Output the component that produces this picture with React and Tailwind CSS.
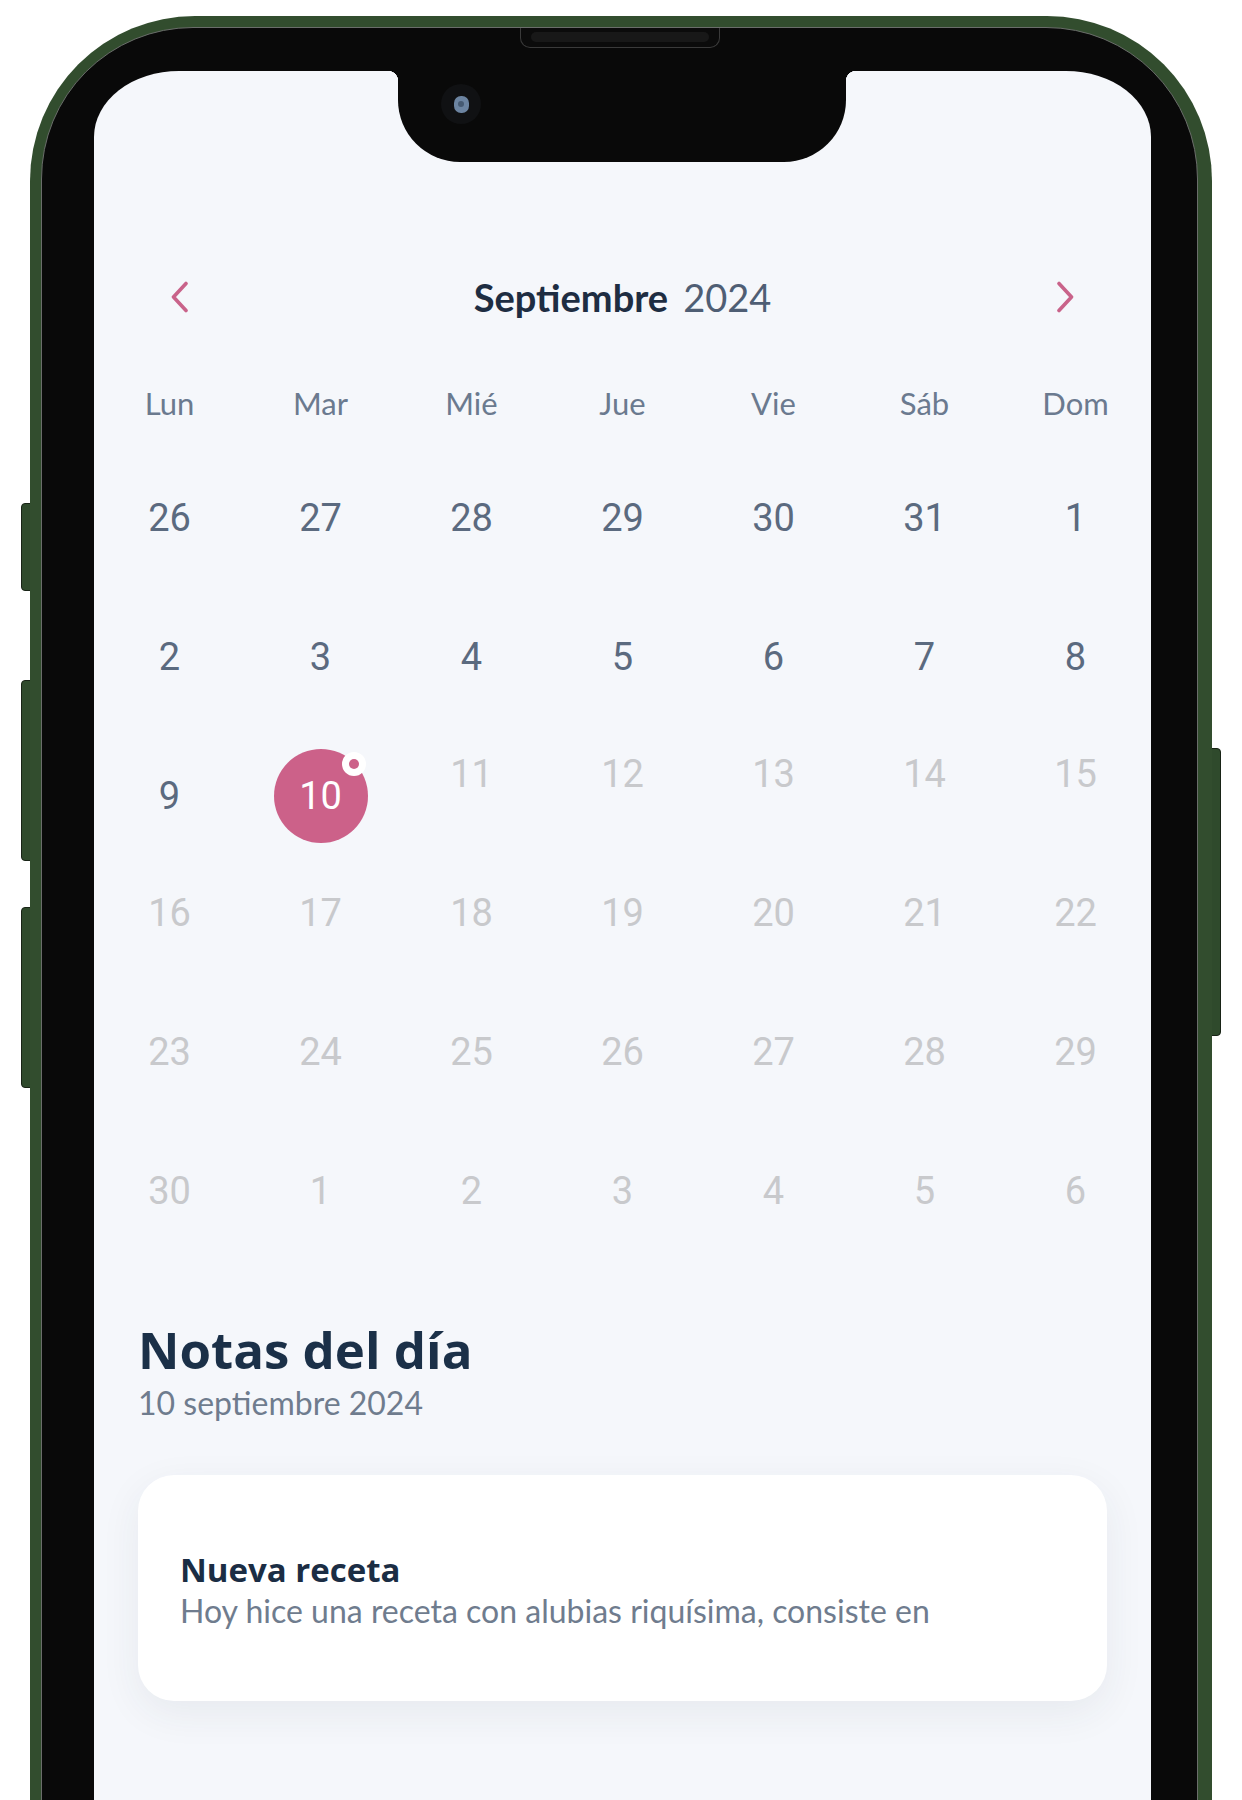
import React from 'react';

const weekDays = ['Lun', 'Mar', 'Mié', 'Jue', 'Vie', 'Sáb', 'Dom'];

// p = past/current month, s = selected, f = upcoming
const weeks = [
  [[26, 'p'], [27, 'p'], [28, 'p'], [29, 'p'], [30, 'p'], [31, 'p'], [1, 'p']],
  [[2, 'p'], [3, 'p'], [4, 'p'], [5, 'p'], [6, 'p'], [7, 'p'], [8, 'p']],
  [[9, 'p'], [10, 's'], [11, 'f'], [12, 'f'], [13, 'f'], [14, 'f'], [15, 'f']],
  [[16, 'f'], [17, 'f'], [18, 'f'], [19, 'f'], [20, 'f'], [21, 'f'], [22, 'f']],
  [[23, 'f'], [24, 'f'], [25, 'f'], [26, 'f'], [27, 'f'], [28, 'f'], [29, 'f']],
  [[30, 'f'], [1, 'f'], [2, 'f'], [3, 'f'], [4, 'f'], [5, 'f'], [6, 'f']],
];

function Chevron({ dir }) {
  const d = dir === 'left' ? 'M16 2.5 L3.5 16 L16 29.5' : 'M4 2.5 L16.5 16 L4 29.5';
  return (
    <svg width="20" height="32" viewBox="0 0 20 32" fill="none">
      <path d={d} stroke="#c9638a" strokeWidth="3.6" strokeLinecap="round" strokeLinejoin="round" />
    </svg>
  );
}

function DayCell({ n, kind }) {
  if (kind === 's') {
    return (
      <div className="h-[139px] flex items-center justify-center">
        <div className="relative w-[94px] h-[94px] rounded-full bg-[#cc6189] flex items-center justify-center">
          <span className="text-[38px] leading-none text-white font-['Roboto',sans-serif]">{n}</span>
          <span className="absolute left-[68px] top-[3px] w-[24px] h-[24px] rounded-full bg-white flex items-center justify-center">
            <span className="w-[10px] h-[10px] rounded-full bg-[#cc6189]" />
          </span>
        </div>
      </div>
    );
  }
  const color = kind === 'p' ? 'text-[#5b6a7f]' : 'text-[#c8c9cc] pb-[44px]';
  return (
    <div className={`h-[139px] flex items-center justify-center ${color}`}>
      <span className="text-[38px] leading-none font-['Roboto',sans-serif]">{n}</span>
    </div>
  );
}

export default function App() {
  return (
    <div className="relative w-[1242px] h-[1800px] overflow-hidden bg-white">
      {/* side buttons */}
      <div className="absolute left-[21px] top-[503px] w-[14px] h-[88px] rounded-l-[4px] bg-[#2f4a2c] border border-[#182316]" />
      <div className="absolute left-[21px] top-[680px] w-[14px] h-[181px] rounded-l-[4px] bg-[#2f4a2c] border border-[#182316]" />
      <div className="absolute left-[21px] top-[907px] w-[14px] h-[181px] rounded-l-[4px] bg-[#2f4a2c] border border-[#182316]" />
      <div className="absolute left-[1208px] top-[748px] w-[13px] h-[288px] rounded-r-[4px] bg-[#2f4a2c] border border-[#182316]" />

      {/* phone frame */}
      <div className="relative ml-[30px] mt-[16px] w-[1182px] h-[1900px] rounded-t-[165px] bg-[#324d2e] pl-[11px] pr-[14px] pt-[11px]">
        <div className="h-full rounded-t-[152px] border border-[#6a6d6a] bg-[#090909] pl-[52px] pr-[46px] pt-[43px]">
          <div className="relative h-full rounded-t-[85px_66px] bg-[#f5f7fb] font-['Lato',sans-serif]">
            {/* notch */}
            <div className="absolute left-[294px] top-0 w-[10px] h-[10px] bg-[radial-gradient(circle_at_0_100%,transparent_10px,#090909_10.5px)]" />
            <div className="absolute left-[752px] top-0 w-[10px] h-[10px] bg-[radial-gradient(circle_at_100%_100%,transparent_10px,#090909_10.5px)]" />
            <div className="absolute left-[304px] top-0 w-[448px] h-[91px] rounded-b-[62px] bg-[#090909]">
              <div className="absolute left-[43px] top-[13px] w-[40px] h-[40px] rounded-full bg-[#101113] flex items-center justify-center">
                <div className="w-[15px] h-[17px] rounded-[7px] bg-[#6c84a1] flex items-center justify-center">
                  <div className="w-[6px] h-[6px] rounded-full bg-[#465a72]" />
                </div>
              </div>
            </div>

            {/* header */}
            <div className="pt-[196px] px-[76px] flex items-center justify-between h-[256px]">
              <Chevron dir="left" />
              <div className="flex items-baseline gap-[15px] text-[38px] leading-none">
                <span className="font-bold text-[#1e2d42]">Septiembre</span>
                <span className="text-[#4f5e74]">2024</span>
              </div>
              <Chevron dir="right" />
            </div>

            {/* weekdays */}
            <div className="grid grid-cols-7 mt-[56px] h-[40px]">
              {weekDays.map((d) => (
                <div key={d} className="flex items-center justify-center text-[31px] leading-none text-[#6b7a8f]">
                  {d}
                </div>
              ))}
            </div>

            {/* days */}
            <div className="grid grid-cols-7 mt-[25px]">
              {weeks.flat().map(([n, k], i) => (
                <DayCell key={i} n={n} kind={k} />
              ))}
            </div>

            {/* notes */}
            <div className="px-[44px] mt-[37px]">
              <h2 className="text-[51px] leading-[60px] font-bold text-[#1b3048] font-['Open_Sans',sans-serif]">
                Notas del día
              </h2>
              <p className="mt-[5px] text-[32px] leading-[38px] text-[#6f7c8e]">10 septiembre 2024</p>

              <div className="mt-[53px] h-[226px] rounded-[36px] bg-white shadow-[0_12px_40px_rgba(40,50,70,0.07)] pl-[42px] pt-[76px]">
                <h3 className="text-[33px] leading-[38px] font-bold text-[#1b2d44] font-['Open_Sans',sans-serif]">
                  Nueva receta
                </h3>
                <p className="mt-[3px] text-[32px] leading-[38px] text-[#6f7c8e]">
                  Hoy hice una receta con alubias riquísima, consiste en
                </p>
              </div>
            </div>
          </div>
        </div>

        {/* speaker */}
        <div className="absolute left-[490px] top-[12px] w-[200px] h-[20px] rounded-b-[10px] border border-t-0 border-[#3a3a3a] bg-[#0b0b0b] px-[10px] pt-[4px]">
          <div className="h-[10px] rounded-full bg-[#181818]" />
        </div>
      </div>
    </div>
  );
}
